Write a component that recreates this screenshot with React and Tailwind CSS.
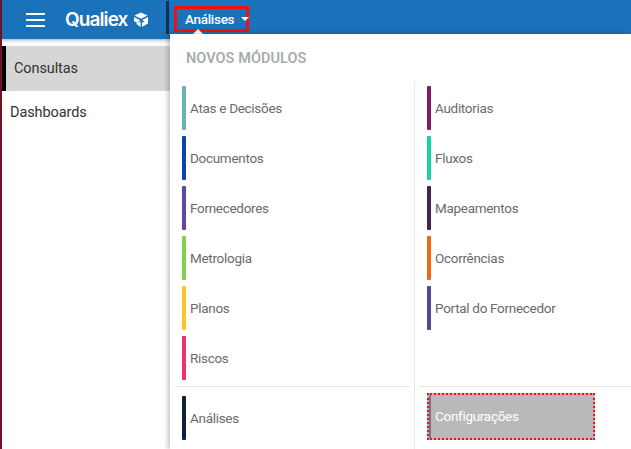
const leftItems = [
  { label: 'Atas e Decisões', bar: 'bg-[#66b2ac]' },
  { label: 'Documentos', bar: 'bg-[#0a44b0]' },
  { label: 'Fornecedores', bar: 'bg-[#5f4b9b]' },
  { label: 'Metrologia', bar: 'bg-[#84cf4c]' },
  { label: 'Planos', bar: 'bg-[#fdc526]' },
  { label: 'Riscos', bar: 'bg-[#f0306f]' },
];

const rightItems = [
  { label: 'Auditorias', bar: 'bg-[#7f1d66]' },
  { label: 'Fluxos', bar: 'bg-[#14d3a3]' },
  { label: 'Mapeamentos', bar: 'bg-[#46234f]' },
  { label: 'Ocorrências', bar: 'bg-[#ec6a12]' },
  { label: 'Portal do Fornecedor', bar: 'bg-[#5a4793]' },
];

function MenuItem({ label, bar }) {
  return (
    <div className="flex h-11 items-stretch">
      <div className={`w-[4px] rounded-[1px] ${bar}`} />
      <span className="ml-[4px] self-center text-[13.5px] tracking-[-0.3px] text-[#6b6b6b]">{label}</span>
    </div>
  );
}

function LogoMark() {
  return (
    <svg width="16" height="16" viewBox="0 0 16 16" className="ml-[5px]">
      <path d="M8 .5 14.5 3.5 8 6.8 1.5 3.5Z" fill="#fff" />
      <path d="M1 5 7 8.2 4.6 11 1 9.2Z" fill="#fff" />
      <path d="M15 5V11.5L9 15V11L11.5 9.2 9 8Z" fill="#fff" />
      <path d="M3 11.8 7.6 9.6V15Z" fill="#fff" />
    </svg>
  );
}

export default function App() {
  return (
    <div className="relative h-[449px] w-[631px] overflow-hidden bg-white font-['Roboto',sans-serif]">
      <div className="flex h-[39px] items-center border-l-2 border-[#6d1220] bg-[#1a72bb] shadow-[0_1px_4px_rgba(0,0,0,0.35)]">
        <div className="ml-[24px] flex w-[19px] flex-col gap-[4px]">
          <div className="h-[2px] bg-white" />
          <div className="h-[2px] bg-white" />
          <div className="h-[2px] bg-white" />
        </div>
        <div className="ml-[20px] flex items-center">
          <span className="font-['Inter',sans-serif] text-[19px] font-semibold leading-none tracking-[-0.9px] text-white">Qualiex</span>
          <LogoMark />
        </div>
      </div>

      <div className="flex h-[410px]">
        <div className="w-[2px] bg-[#6d1220]" />
        <div className="w-[168px] pt-[7px]">
          <div className="flex h-[45px] items-center bg-[#d6d6d6]">
            <div className="h-full w-[4px] bg-black" />
            <span className="ml-2 text-[14.5px] tracking-[-0.1px] text-[#333]">Consultas</span>
          </div>
          <div className="flex h-11 items-center pl-2 text-[14.5px] tracking-[-0.1px] text-[#333]">Dashboards</div>
        </div>
      </div>

      {/* header menu button sits over the header bar */}
      <div className="absolute left-[166px] top-0 flex h-[34px] items-start">
        <div className="mt-[1px] h-[33px] w-[3px] bg-[#0d2f52]" />
        <div className="ml-[5px] mt-[6px] flex h-[26px] w-[75px] items-center border-[3px] border-[#f01010] pl-[8px] text-[13.5px] font-medium tracking-[-0.3px] text-white">
          Análises
          <span className="ml-[7px] h-0 w-0 border-x-[4px] border-t-[4px] border-x-transparent border-t-white" />
        </div>
      </div>
      <div className="absolute left-[193px] top-[29px] h-0 w-0 border-x-[5px] border-b-[5px] border-x-transparent border-b-white" />

      {/* dropdown panel */}
      <div className="absolute left-[170px] top-[34px] h-[415px] w-[461px] bg-white shadow-[-2px_0_5px_rgba(0,0,0,0.25)]">
        <div className="pl-4 pt-[16px] text-[14.5px] font-semibold leading-[18px] tracking-[0.05px] text-[#a6aeab]">NOVOS MÓDULOS</div>
        <div className="mt-[14px] flex h-[367px]">
          <div className="flex w-[244px] flex-col">
            <div className="flex h-[304px] flex-col gap-[6px] pl-3 pt-[4px]">
              {leftItems.map((item) => (
                <MenuItem key={item.label} {...item} />
              ))}
            </div>
            <div className="ml-[5px] mr-1 h-px bg-[#e4e4e4]" />
            <div className="pl-3 pt-[9px]">
              <MenuItem label="Análises" bar="bg-[#0b2239]" />
            </div>
          </div>
          <div className="w-px bg-[#e8e8e8]" />
          <div className="flex flex-1 flex-col">
            <div className="flex h-[304px] flex-col gap-[6px] pl-3 pt-[4px]">
              {rightItems.map((item) => (
                <MenuItem key={item.label} {...item} />
              ))}
            </div>
            <div className="ml-[5px] h-px bg-[#e4e4e4]" />
            <div className="pl-3 pt-[6px]">
              <div className="flex h-[47px] w-[168px] items-stretch border-2 border-dotted border-[#f01010] bg-[#b9b9b9] text-[13.5px] tracking-[-0.3px] text-white">
                <div className="w-[2px] bg-[#777]" />
                <span className="ml-[4px] self-center">Configurações</span>
              </div>
            </div>
          </div>
        </div>
      </div>
    </div>
  );
}
